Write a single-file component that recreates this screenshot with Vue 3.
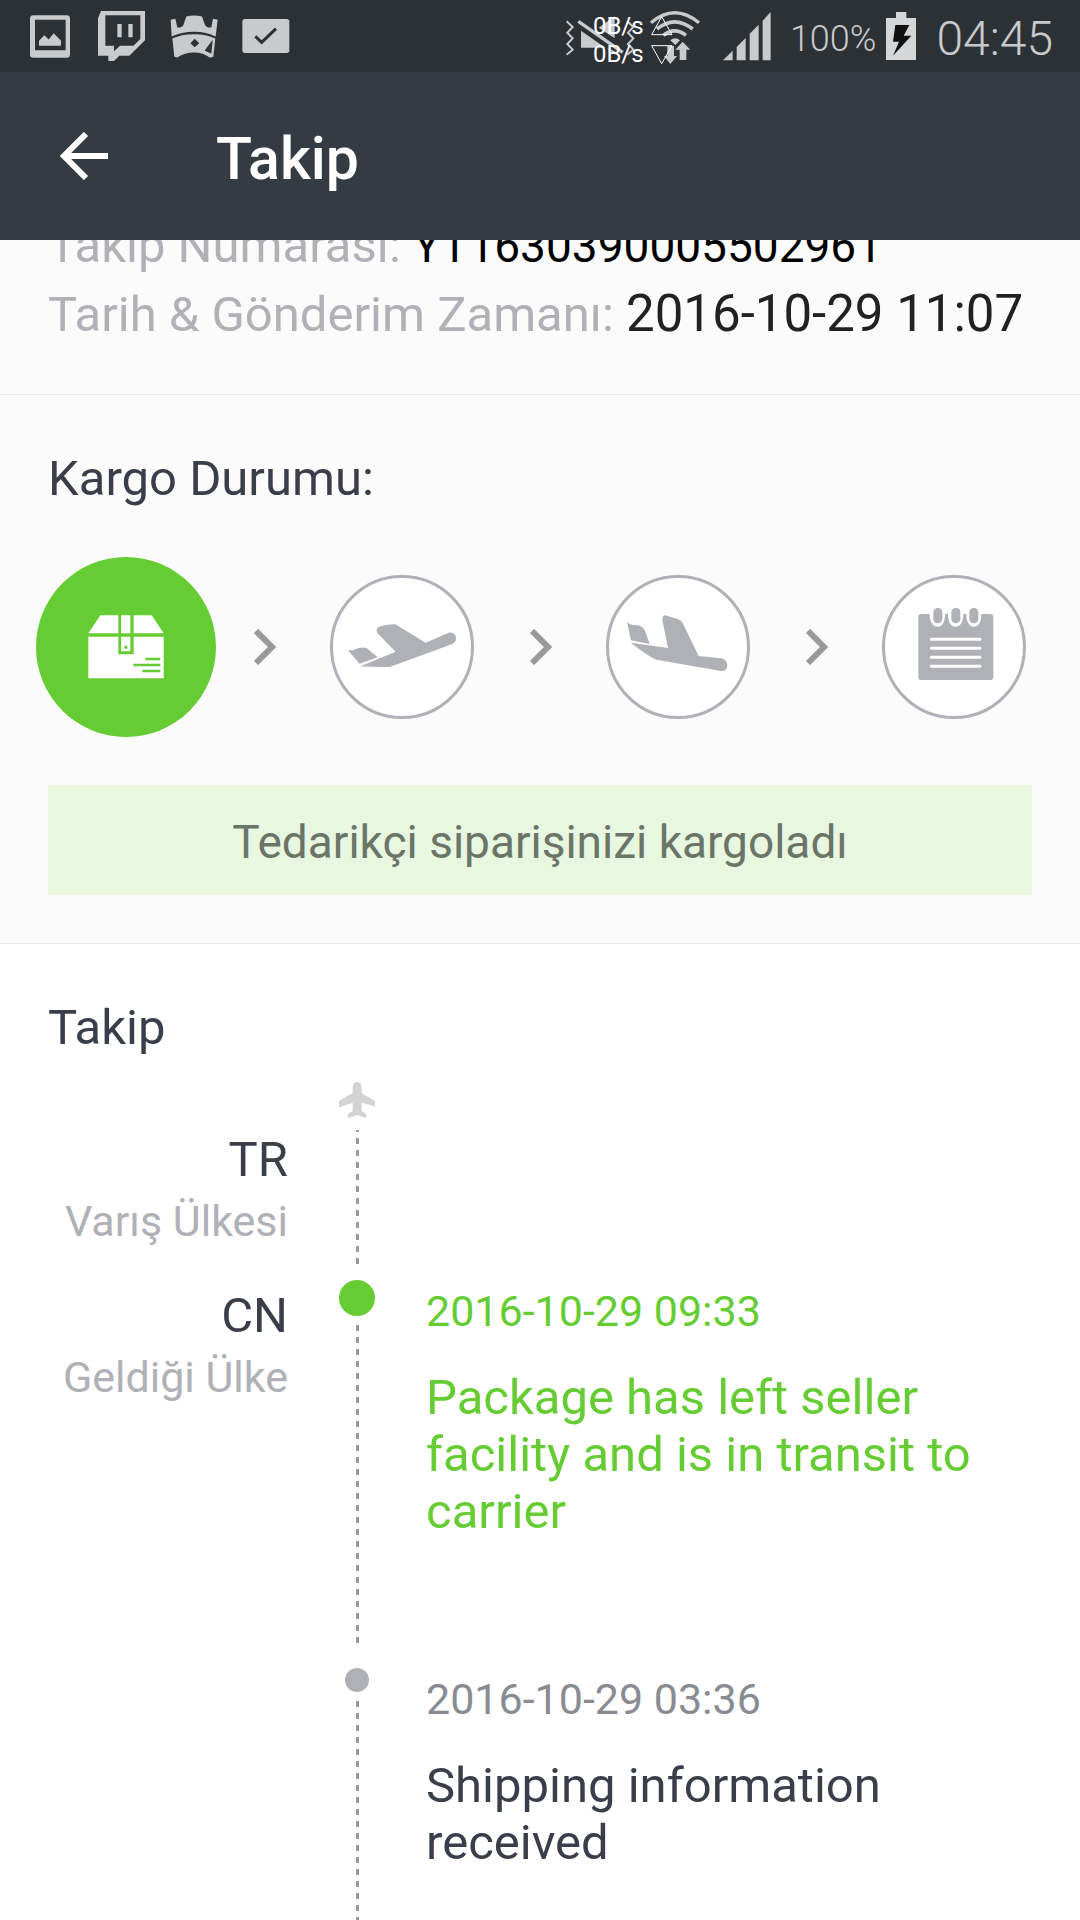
<script setup>
const shipment = [
  { label: 'Takip Numarası:', value: 'YT1630390005502961', kind: 'number' },
  { label: 'Tarih & Gönderim Zamanı:', value: '2016-10-29 11:07', kind: 'date' },
]

const steps = [
  { id: 'package', name: 'Kargolandı', active: true },
  { id: 'takeoff', name: 'Kalkış', active: false },
  { id: 'landing', name: 'Varış', active: false },
  { id: 'calendar', name: 'Teslimat', active: false },
]

const events = [
  {
    code: 'CN',
    place: 'Geldiği Ülke',
    time: '2016-10-29 09:33',
    text: 'Package has left seller facility and is in transit to carrier',
    latest: true,
  },
  {
    time: '2016-10-29 03:36',
    text: 'Shipping information received',
    latest: false,
  },
]
</script>

<template>
  <div class="page">
    <div class="status-bar">
      <div class="notifications">
        <svg width="40" height="43" viewBox="0 0 120 128" aria-hidden="true">
          <path fill="#c8cacc" fill-rule="evenodd" d="M10 0H110Q120 0 120 10V118Q120 128 110 128H10Q0 128 0 118V10Q0 0 10 0ZM15 14V105H107V14Z" />
          <path fill="#c8cacc" d="M27 92V77L43 60L56 73L71 54L93 77V92Z" />
        </svg>
        <svg width="52" height="50" viewBox="-12 0 156 150" aria-hidden="true">
          <path fill="#c8cacc" fill-rule="evenodd" d="M9 0H141V88L94 134H64L48 150H31V134H0V22ZM22 13V104H48V121L66 104H106L127 84V13Z" />
          <path fill="#c8cacc" d="M58 39H71V79H58ZM91 39H104V79H91Z" />
        </svg>
        <svg width="48" height="43" viewBox="0 0 144 128" aria-hidden="true">
          <path fill="#c8cacc" d="M2 14L16 11L22 37Q38 38 41 27L49 4Q72 -2 96 4L104 27Q108 38 124 37L129 11L143 14L137 64Q110 50 72 50Q34 50 5 64Z" />
          <path fill="#c8cacc" fill-rule="evenodd" d="M7 70Q34 57 72 57Q110 57 136 70L130 125L120 128Q100 112 72 112Q44 112 22 127L13 125ZM61 84L74 96L88 84L74 71ZM128 74L104 106L124 116Z" />
        </svg>
        <svg width="48" height="34" viewBox="0 0 144 102" aria-hidden="true">
          <rect x="1" width="141" height="102" rx="8" fill="#c8cacc" />
          <path d="M40 52L59 70L102 29" fill="none" stroke="#2c3135" stroke-width="9" />
        </svg>
      </div>

      <div class="system">
        <div class="connectivity">
          <svg width="136" height="60" viewBox="75 15 408 180" aria-hidden="true">
            <g fill="none" stroke="#c8cacc" stroke-width="6">
              <path d="M80 61L98 78L82 95L98 112L82 129L98 146L80 161" />
              <path d="M262 61L280 78L264 95L280 112L264 129L280 146L262 161" />
            </g>
            <path fill="#c8cacc" d="M123 89L196 140H123ZM176 80L224 46V112ZM200 142L224 158V150Z" />
            <path stroke="#c8cacc" stroke-width="10" d="M115 61L248 154" />
            <g fill="none" stroke="#c8cacc">
              <path stroke-width="10" d="M333 65Q404 5 477 65" />
              <path stroke-width="11" d="M351 84Q404 41 458 84" />
              <path stroke-width="11" d="M370 103Q404 76 438 103" />
            </g>
            <path fill="#c8cacc" d="M391 118Q406 106 420 118L406 132ZM428 122L451 146H439V177H419V146H406ZM382 135H402V165H411L391 189L372 165H382Z" />
            <g fill="none" stroke="#fff" stroke-width="3">
              <path d="M335 101L365 47L396 101Z" />
              <path d="M335 134H396L365 188Z" />
            </g>
          </svg>
          <div class="rates">
            <span>0B/s</span>
            <span>0B/s</span>
          </div>
        </div>
        <svg class="signal" width="49" height="49" viewBox="0 0 147 147" aria-hidden="true">
          <path fill="#c8cacc" d="M0 145L29 116V145ZM41 145V105L68 78V145ZM80 145V65L107 38V145ZM119 145V26L143 0V145Z" />
        </svg>
        <span class="percent">100%</span>
        <svg class="battery" width="30" height="48" viewBox="0 0 90 144" aria-hidden="true">
          <path fill="#d4d6d7" d="M0 18H30V0H61V18H90V144H0Z" />
          <path fill="#111" d="M28 39H70L53 71H76L21 131L39 89H21Z" />
        </svg>
        <span class="clock">04:45</span>
      </div>
    </div>

    <header class="app-bar">
      <button type="button" class="back" aria-label="Geri">
        <svg width="48" height="48" viewBox="0 0 48 48" aria-hidden="true">
          <path d="M48 24H6M26 2L4 24L26 46" fill="none" stroke="#fff" stroke-width="6" />
        </svg>
      </button>
      <h1>Takip</h1>
    </header>

    <main>
      <section class="shipment">
        <p v-for="row in shipment" :key="row.kind">
          {{ row.label }} <span :class="row.kind">{{ row.value }}</span>
        </p>
      </section>

      <section class="state">
        <h2>Kargo Durumu:</h2>
        <ol class="steps">
          <li v-for="(step, i) in steps" :key="step.id">
            <svg v-if="i > 0" class="chevron" width="24" height="36" viewBox="0 0 24 36" aria-hidden="true">
              <path d="M3 2L19 18L3 34" fill="none" stroke="#999" stroke-width="6" />
            </svg>
            <div class="disc-box">
              <div class="disc" :class="{ active: step.active }" role="img" :aria-label="step.name">
                <svg v-if="step.id === 'package'" width="76" height="64" viewBox="0 0 228 192">
                  <path fill="#fff" d="M37 1H91V55H1ZM99 1H127V55H99ZM137 1H191L227 55H137ZM1 65H91V118H137V65H227V190H1ZM99 65H127V109H99Z" />
                  <path fill="#6c3" d="M109 92H118V101H109ZM172 128H217V136H172ZM136 146H217V154H136ZM163 164H217V172H163Z" />
                </svg>
                <svg v-else-if="step.id === 'takeoff'" width="138" height="138" viewBox="0 0 414 414">
                  <path fill="#b0b1b7" d="M45 217H61Q78 205 101 210L134 238L80 257ZM82 265L188 221L135 167Q128 157 133 149Q158 139 187 139L278 194L345 165C367 158 379 185 360 197L170 267Q130 268 82 265Z" />
                </svg>
                <svg v-else-if="step.id === 'landing'" width="138" height="138" viewBox="0 0 414 414">
                  <path fill="#b0b1b7" d="M54 132Q63 142 73 141C98 140 104 150 108 158L122 198L66 187ZM65 194L177 210L160 125Q160 112 168 112L208 124Q216 128 220 133L269 234L335 241C363 244 360 284 336 279L147 246Q132 245 65 194Z" />
                </svg>
                <svg v-else width="80" height="78" viewBox="-12 0 240 234">
                  <path fill="#b0b1b7" d="M10 18H35C35 40 43 56 59 56C75 56 81 40 81 18H90C90 40 97 56 113 56C129 56 136 40 136 18H145C145 40 153 56 168 56C184 56 190 40 190 18H216Q226 18 226 28V206Q226 216 216 216H10Q1 216 1 206V28Q1 18 10 18Z" />
                  <g fill="#b0b1b7">
                    <rect x="46" width="27" height="46" rx="13" />
                    <rect x="100" width="27" height="46" rx="13" />
                    <rect x="154" width="27" height="46" rx="13" />
                  </g>
                  <path d="M40 94H186M40 121H186M40 148H186M40 175H186" stroke="#fff" stroke-width="9" stroke-linecap="round" />
                </svg>
              </div>
            </div>
          </li>
        </ol>
        <p class="banner">Tedarikçi siparişinizi kargoladı</p>
      </section>

      <section class="tracking">
        <h2>Takip</h2>
        <ol class="timeline">
          <li class="row destination">
            <div class="country">
              <p class="code">TR</p>
              <p class="place">Varış Ülkesi</p>
            </div>
            <div class="marker">
              <svg width="36" height="36" viewBox="0 0 108 108" aria-hidden="true">
                <path fill="#d3d3d3" d="M54 0Q67 1 68 14V33L108 57V73L68 62V87L81 96V108L54 99L27 108V96L41 87V62L0 76V57L41 33V14Q42 1 54 0Z" />
              </svg>
              <i class="line"></i>
            </div>
          </li>
          <li v-for="event in events" :key="event.time" class="row" :class="{ latest: event.latest }">
            <div class="country">
              <template v-if="event.code">
                <p class="code">{{ event.code }}</p>
                <p class="place">{{ event.place }}</p>
              </template>
            </div>
            <div class="marker">
              <i class="dot"></i>
              <i class="line"></i>
            </div>
            <div class="event">
              <time>{{ event.time }}</time>
              <p>{{ event.text }}</p>
            </div>
          </li>
        </ol>
      </section>
    </main>
  </div>
</template>

<style>
body {
  margin: 0;
  background: #fff;
}
</style>

<style scoped>
.page {
  display: flex;
  flex-direction: column;
  min-height: 100vh;
  font-family: Roboto, "Liberation Sans", sans-serif;
  font-size: 49px;
  line-height: 56px;
  color: #3a3e4a;
}

h1,
h2,
p,
ol {
  margin: 0;
  padding: 0;
  font-size: inherit;
  font-weight: 400;
  list-style: none;
}

svg {
  display: block;
  flex: none;
}

.status-bar {
  display: flex;
  justify-content: space-between;
  align-items: center;
  height: 72px;
  padding: 0 27px 0 30px;
  background: #2c3135;
  color: #c8cacc;
}

.notifications {
  display: flex;
  align-items: center;
  gap: 24px;
}

.system {
  display: flex;
  align-items: center;
}

.connectivity {
  position: relative;
}

.rates {
  position: absolute;
  top: 6px;
  left: 28px;
  display: flex;
  flex-direction: column;
  font-size: 24px;
  line-height: 28px;
  color: #fff;
}

.signal {
  margin-left: 22px;
}

.percent,
.clock {
  padding-top: 5px;
  font-weight: 300;
}

.percent {
  margin-left: 18px;
  font-size: 36px;
}

.battery {
  margin: 0 20px 0 10px;
}

.clock {
  font-size: 48px;
}

.app-bar {
  position: relative;
  z-index: 1;
  display: flex;
  align-items: center;
  gap: 108px;
  height: 168px;
  padding: 0 60px;
  box-sizing: border-box;
  background: #353b42;
  color: #fff;
}

.back {
  padding: 0;
  border: 0;
  background: none;
}

h1 {
  padding-top: 6px;
  font-size: 59px;
  font-weight: 500;
  line-height: 72px;
}

main {
  flex: 1;
  display: flex;
  flex-direction: column;
}

.shipment {
  margin-top: -29px;
  padding: 0 48px 45px;
  border-bottom: 1px solid #e8e8e8;
  background: #fbfbfb;
  line-height: 69px;
  color: #b0b1b7;
}

.number,
.date {
  line-height: 1;
}

.number {
  font-size: 46px;
  color: #000;
}

.date {
  font-size: 51px;
  color: #212121;
}

.state {
  padding: 56px 0 48px;
  border-bottom: 1px solid #e8e8e8;
  background: #fbfbfb;
}

h2 {
  padding: 0 48px;
}

.steps {
  display: flex;
  justify-content: space-between;
  margin: 50px 36px 48px;
}

.steps li {
  display: flex;
  align-items: center;
}

.chevron {
  margin: 0 35px 0 37px;
}

.disc-box {
  display: flex;
  align-items: center;
  justify-content: center;
  width: 180px;
  height: 180px;
}

.disc {
  display: flex;
  align-items: center;
  justify-content: center;
  width: 144px;
  height: 144px;
  box-sizing: border-box;
  border: 3px solid #b0b1b7;
  border-radius: 50%;
  background: #fff;
}

.disc.active {
  width: 180px;
  height: 180px;
  border: 0;
  background: #6c3;
}

.banner {
  margin: 0 48px;
  padding: 30px 0 25px;
  border-radius: 3px;
  background: #e8f7e0;
  font-size: 46px;
  line-height: 55px;
  text-align: center;
  color: #6a7567;
}

.tracking {
  flex: 1;
  display: flex;
  flex-direction: column;
  padding-top: 56px;
}

.timeline {
  flex: 1;
  display: flex;
  flex-direction: column;
  margin-top: 14px;
}

.row {
  display: grid;
  grid-template-columns: 288px 138px 1fr;
}

.row:last-child {
  flex: 1;
}

.country {
  padding-top: 20px;
  text-align: right;
}

.destination .country {
  padding: 62px 0 22px;
}

.place {
  margin-top: 8px;
  font-size: 43px;
  line-height: 50px;
  color: #b0b1b7;
}

.marker {
  display: flex;
  flex-direction: column;
  align-items: center;
  gap: 9px;
  padding: 12px 0;
}

.destination .marker {
  gap: 12px;
  padding-bottom: 4px;
}

.row:last-child .marker {
  padding-bottom: 0;
}

.dot {
  width: 24px;
  height: 24px;
  border-radius: 50%;
  background: #b0b1b7;
}

.latest .dot {
  width: 36px;
  height: 36px;
  background: #6c3;
}

.line {
  flex: 1;
  width: 3px;
  background: repeating-linear-gradient(to bottom, #999 0 6px, transparent 6px 12px);
}

.destination .line {
  background: repeating-linear-gradient(to top, #999 0 6px, transparent 6px 12px);
}

.event {
  padding: 18px 48px 0 0;
}

.latest .event {
  padding-bottom: 116px;
  color: #6c3;
}

time {
  display: block;
  font-size: 43px;
  line-height: 50px;
  color: #888b92;
}

.latest time {
  color: inherit;
}

.event p {
  margin-top: 33px;
  line-height: 57px;
}
</style>
